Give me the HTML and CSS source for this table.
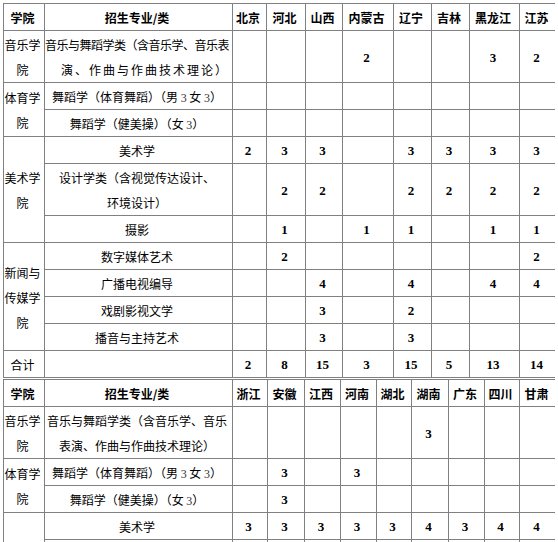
FILE: index.html
```html
<!DOCTYPE html>
<html lang="zh-CN">
<head>
<meta charset="utf-8">
<title>招生计划</title>
<link rel="stylesheet" href="styles.css">
</head>
<body>
<table class="t">
  <colgroup>
    <col class="w41"><col class="w188"><col class="w34"><col class="w39"><col class="w37"><col class="w51"><col class="w38"><col class="w38"><col class="w50"><col class="w37">
  </colgroup>
  <tr><th>学院</th><th>招生专业/类</th><th>北京</th><th>河北</th><th>山西</th><th>内蒙古</th><th>辽宁</th><th>吉林</th><th>黑龙江</th><th>江苏</th></tr>
  <tr><td>音乐学院</td><td class="rt"><span class="ln lsa">音乐与舞蹈学类（含音乐学、音乐表</span><span class="ln lsb">演、作曲与作曲技术理论）</span></td><td></td><td></td><td></td><td class="n">2</td><td></td><td></td><td class="n">3</td><td class="n">2</td></tr>
  <tr><td rowspan="2">体育学院</td><td>舞蹈学（体育舞蹈）（男 <span class="d">3</span> 女 <span class="d">3</span>）</td><td></td><td></td><td></td><td></td><td></td><td></td><td></td><td></td></tr>
  <tr><td>舞蹈学（健美操）（女 <span class="d">3</span>）</td><td></td><td></td><td></td><td></td><td></td><td></td><td></td><td></td></tr>
  <tr><td rowspan="3">美术学院</td><td>美术学</td><td class="n">2</td><td class="n">3</td><td class="n">3</td><td></td><td class="n">3</td><td class="n">3</td><td class="n">3</td><td class="n">3</td></tr>
  <tr><td><span class="ln">设计学类（含视觉传达设计、</span><span class="ln">环境设计）</span></td><td></td><td class="n">2</td><td class="n">2</td><td></td><td class="n">2</td><td class="n">2</td><td class="n">2</td><td class="n">2</td></tr>
  <tr><td>摄影</td><td></td><td class="n">1</td><td></td><td class="n">1</td><td class="n">1</td><td></td><td class="n">1</td><td class="n">1</td></tr>
  <tr><td rowspan="4">新闻与传媒学院</td><td>数字媒体艺术</td><td></td><td class="n">2</td><td></td><td></td><td></td><td></td><td></td><td class="n">2</td></tr>
  <tr><td>广播电视编导</td><td></td><td></td><td class="n">4</td><td></td><td class="n">4</td><td></td><td class="n">4</td><td class="n">4</td></tr>
  <tr><td>戏剧影视文学</td><td></td><td></td><td class="n">3</td><td></td><td class="n">2</td><td></td><td></td><td></td></tr>
  <tr><td>播音与主持艺术</td><td></td><td></td><td class="n">3</td><td></td><td class="n">3</td><td></td><td></td><td></td></tr>
  <tr><td>合计</td><td></td><td class="n">2</td><td class="n">8</td><td class="n">15</td><td class="n">3</td><td class="n">15</td><td class="n">5</td><td class="n">13</td><td class="n">14</td></tr>
</table>
<table class="t t2">
  <colgroup>
    <col class="w41"><col class="w188"><col class="w35"><col class="w37"><col class="w36"><col class="w36"><col class="w35"><col class="w37"><col class="w36"><col class="w35"><col class="w37">
  </colgroup>
  <tr><th>学院</th><th>招生专业/类</th><th>浙江</th><th>安徽</th><th>江西</th><th>河南</th><th>湖北</th><th>湖南</th><th>广东</th><th>四川</th><th>甘肃</th></tr>
  <tr><td>音乐学院</td><td><span class="ln">音乐与舞蹈学类（含音乐学、音乐</span><span class="ln">表演、作曲与作曲技术理论）</span></td><td></td><td></td><td></td><td></td><td></td><td class="n">3</td><td></td><td></td><td></td></tr>
  <tr><td rowspan="2">体育学院</td><td>舞蹈学（体育舞蹈）（男 <span class="d">3</span> 女 <span class="d">3</span>）</td><td></td><td class="n">3</td><td></td><td class="n">3</td><td></td><td></td><td></td><td></td><td></td></tr>
  <tr><td>舞蹈学（健美操）（女 <span class="d">3</span>）</td><td></td><td class="n">3</td><td></td><td></td><td></td><td></td><td></td><td></td><td></td></tr>
  <tr><td rowspan="3">美术学院</td><td>美术学</td><td class="n">3</td><td class="n">3</td><td class="n">3</td><td class="n">3</td><td class="n">3</td><td class="n">4</td><td class="n">3</td><td class="n">4</td><td class="n">4</td></tr>
  <tr><td><span class="ln">设计学类（含视觉传达设计、</span><span class="ln">环境设计）</span></td><td></td><td></td><td></td><td></td><td></td><td></td><td></td><td></td><td></td></tr>
  <tr><td>摄影</td><td></td><td></td><td></td><td></td><td></td><td></td><td></td><td></td><td></td></tr>
</table>
</body>
</html>
```
FILE: styles.css
```css
body {
  margin: 3px;
  background: #ffffff;
  color: #000000;
  font-family: "Noto Sans CJK SC", "Liberation Sans", sans-serif;
  font-size: 12px;
}

.t {
  border-collapse: collapse;
  table-layout: fixed;
  width: 554px;
}

.t2 {
  margin-top: 1px;
}

.t th,
.t td {
  border: 1px solid #808080;
  padding: 1px 3px 0 0;
  height: 25px;
  line-height: 25px;
  text-align: center;
  vertical-align: middle;
  overflow: visible;
}

.t th {
  font-weight: bold;
}

.n {
  font-family: "Liberation Serif", serif;
  font-weight: bold;
  font-size: 13px;
}

.d {
  font-family: "Liberation Serif", serif;
  color: #333333;
  line-height: 1;
}

.ln {
  display: block;
  white-space: nowrap;
}

.t td.rt {
  text-align: right;
}

.lsa {
  letter-spacing: -0.5px;
}

.lsb {
  letter-spacing: 2px;
}

.w34 { width: 34px; }
.w35 { width: 35px; }
.w36 { width: 36px; }
.w37 { width: 37px; }
.w38 { width: 38px; }
.w39 { width: 39px; }
.w41 { width: 41px; }
.w50 { width: 50px; }
.w51 { width: 51px; }
.w188 { width: 188px; }
```
